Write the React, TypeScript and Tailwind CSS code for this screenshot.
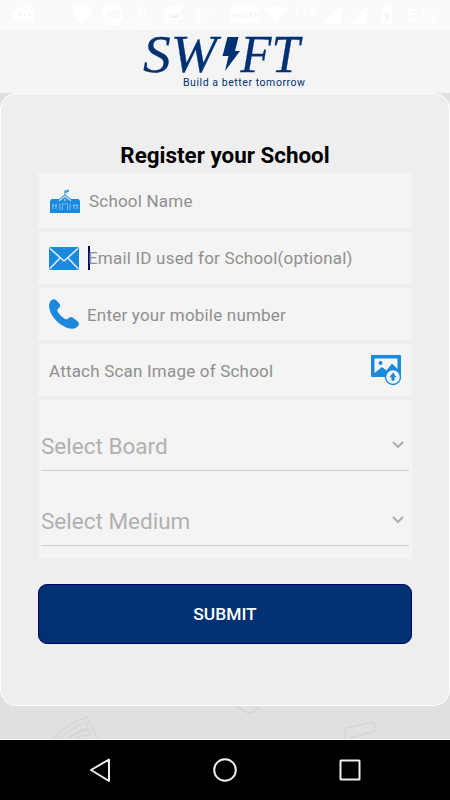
import type { ReactNode } from "react";

const StatusBar = () => (
  <div className="h-[30px] shrink-0 bg-[#fafafa]">
    <svg width="450" height="30" viewBox="0 0 450 30" fill="#fff" fontFamily="Roboto, sans-serif">
      <path d="M12 15l5-7q1-1 2-1h12q2 0 2 2v12q0 2-2 2H19q-1 0-2-1z" />
      <g fill="#f3f3f3">
        <circle cx="20" cy="15" r="1.2" />
        <circle cx="25" cy="15" r="1.2" />
        <circle cx="30" cy="15" r="1.2" />
      </g>
      <path d="M82.500 24C76 18 73 15 73 11c0-6 7-7 9.500-2.500C85 4 92 5 92 11c0 4-3 7-9.500 13z" />
      <circle cx="112.500" cy="15" r="10.500" />
      <path d="M106 12q4-3 3 5 3-7 5-5 1 2-1 5 3-7 5-5 1 1-1 5h3" fill="none" stroke="#f3f3f3" />
      <text x="138" y="16" fontSize="14" fontWeight="500">0</text>
      <text x="131.500" y="25" fontSize="8" fontWeight="700" textLength="21">KB/s</text>
      <path d="M167 6h14v14h-14zM164 9h1.500v12.500H178V24h-14z" />
      <path d="M169 18l3-4 2 2 3-3 3 5z" fill="#f3f3f3" />
      <text x="194.500" y="21" fontSize="15" fontWeight="500" textLength="16" lengthAdjust="spacingAndGlyphs">30°</text>
      <rect x="230" y="7" width="30" height="16" rx="2" />
      <text x="232.500" y="18" fontSize="8" fontWeight="700" fill="#f3f3f3" textLength="26">VOLTE</text>
      <path d="M265 9q10.500-7 21 0l-10.500 15z" />
      <text x="295" y="16" fontSize="12" textLength="21" fill="#fff" fontWeight="500">LTE</text>
      <path d="M341 7v17h-18zM367 7v17h-18zM381 8h3V6h5v2h3v16h-11z" />
      <path d="M388 10l-5 6h3l-1 6 5-7h-3z" fill="#f3f3f3" />
      <text x="406" y="22" fontSize="18" fontWeight="500" textLength="34">5:52</text>
    </svg>
  </div>
);

const Logo = () => (
  <header className="h-[63px] shrink-0 bg-[#f4f4f4] flex flex-col items-center">
    <svg
      className="-mt-[8px] shrink-0"
      width="180"
      height="70"
      viewBox="136 22 180 70"
      fill="#003172"
      fontFamily="'Liberation Serif', serif"
      fontStyle="italic"
      fontSize="53"
    >
      <g stroke="#003172" strokeWidth=".3">
        <text x="144" y="71.500" textLength="74" lengthAdjust="spacingAndGlyphs">SW</text>
        <text x="241.500" y="71.500" textLength="59" lengthAdjust="spacingAndGlyphs">FT</text>
      </g>
      <path d="M228.500 37h11l-3.500 14h5L226 71l3.500-15H223.500z" />
      <text
        x="184"
        y="86"
        fontFamily="Roboto, sans-serif"
        fontStyle="normal"
        fontSize="10.500"
        textLength="122"
      >
        Build a better tomorrow
      </text>
    </svg>
  </header>
);

const SchoolIcon = () => (
  <svg width="30" height="24" viewBox="0 0 30 24" fill="#1b89dc">
    <path d="M0 20.500h30V24H0zM1.500 10H9v11H0v-9zM21 10h7.500l1.500 2v9h-9z" />
    <path d="M7 11.500L15 5l8 6.500v1.500L15 7l-8 6z" opacity=".7" />
    <path d="M9 12.500L15 8l6 4.500V21H9zM14.500 1.500h1v4h-1z" />
    <path d="M15 1.500l4-1v2.500l-4 1z" opacity=".8" />
    <g fill="#8cc3ee">
      <path d="M2 15.500h2v2H2zM5 15.500h2v2H5zM23 15.500h2v2h-2zM26 15.500h2v2h-2z" />
      <path d="M2 18.500h2v1H2zM5 18.500h2v1H5zM23 18.500h2v1h-2zM26 18.500h2v1h-2z" />
      <path d="M9.500 14.500h1V21h-1zM12 14.500h6v.8h-6zM12 15h.8v6H12zM17.200 15h.8v6h-.8zM19.500 14.500h1V21h-1z" />
      <circle cx="15" cy="11" r="1.200" />
    </g>
  </svg>
);

const MailIcon = () => (
  <svg width="30" height="23" viewBox="0 0 30 23">
    <rect width="30" height="23" rx="2" fill="#1b89dc" />
    <path d="M1 1.500l14 12.500 14-12.500M1 21.500l10-10.500M29 21.500l-10-10.500" fill="none" stroke="#e6f0f8" strokeWidth="1.500" />
  </svg>
);

const PhoneIcon = () => (
  <svg width="30" height="30" viewBox="0 0 30 30" fill="#1b89dc">
    <path d="M3 .8Q5.500-.8 7.500 1.500l3 3.300q1.500 2-.2 3.800L8.800 10.200q-.9 1.300 0 2.800 3 4.500 7.200 7 1.500.8 2.700-.2l1.800-1.300q1.800-1 3.500.3l4.800 3.700q1.800 1.800.7 3.700-2.200 3.300-6 3.500C14.500 30 1.500 19 .2 8.500-.3 5 .8 2.300 3 .8z" />
  </svg>
);

const ImageUploadIcon = () => (
  <svg width="31" height="31" viewBox="0 0 31 31" fill="#1b89dc">
    <path fillRule="evenodd" d="M1 0h28q1 0 1 1v21H1q-1 0-1-1V1q0-1 1-1zm2.500 3.500V18l7.500-6 4.500 3.500L21 8.500l5.500 5.500V3.500z" />
    <circle cx="9.500" cy="8" r="2" />
    <circle cx="22" cy="22" r="7.500" fill="#f4f4f4" stroke="#1b89dc" strokeWidth="1.400" />
    <path d="M22 17.500l3.500 4.800h-2v3.500h-3v-3.500h-2z" />
  </svg>
);

type FieldProps = {
  label: string;
  className: string;
  textClass: string;
  children?: ReactNode;
};

const Field = ({ label, className, textClass, children }: FieldProps) => (
  <div className={`bg-[#f4f4f4] flex items-center ${className}`}>
    {children}
    <span className={`text-[17px] leading-5 tracking-[0.2px] whitespace-nowrap text-[#8f8f8f] ${textClass}`}>
      {label}
    </span>
  </div>
);

const Select = ({ label }: { label: string }) => (
  <div className="h-[50px] border-b border-[#cfcfcf] flex items-center justify-between pr-[5px]">
    <span className="text-[22.5px] leading-7 whitespace-nowrap text-[#b0b0b0]">{label}</span>
    <svg className="mb-px" width="12" height="8" viewBox="0 0 12 8" fill="none" stroke="#aaa" strokeWidth="1.800">
      <path d="M1 1l5 5 5-5" />
    </svg>
  </div>
);

const NavBar = () => (
  <nav className="h-[60px] shrink-0 bg-black">
    <svg width="450" height="60" viewBox="0 0 450 60" fill="none" stroke="#eee" strokeWidth="2" strokeLinejoin="round">
      <path d="M109 19.500v21.500L91 30z" />
      <circle cx="225" cy="30" r="10.800" />
      <rect x="340.500" y="20.500" width="19" height="19" rx=".5" />
    </svg>
  </nav>
);

export default function App() {
  return (
    <div className="w-[450px] h-[800px] overflow-hidden bg-[#e0e0e0] flex flex-col font-['Roboto',sans-serif]">
      <StatusBar />
      <Logo />
      <main className="h-[613px] shrink-0 rounded-[16px] border border-white bg-[#eee] px-[37px] flex flex-col">
        <h1 className="mt-[46px] h-[33px] text-center text-[22.4px] leading-[30px] font-bold text-black whitespace-nowrap">
          Register your School
        </h1>
        <div className="flex flex-col gap-1">
          <Field label="School Name" className="h-[55px] pl-3" textClass="ml-[9px]">
            <SchoolIcon />
          </Field>
          <Field label="Email ID used for School(optional)" className="h-[52px] pl-[11px]" textClass="">
            <MailIcon />
            <span className="ml-[9px] -mr-[2px] w-[2px] h-6 bg-[#000066]" />
          </Field>
          <Field label="Enter your mobile number" className="h-[52px] pl-[11px]" textClass="ml-2 pt-px">
            <PhoneIcon />
          </Field>
          <div className="h-[52px] bg-[#f4f4f4] flex items-center justify-between pl-[11px] pr-[10px]">
            <span className="pt-[2px] text-[17px] leading-5 tracking-[0.2px] whitespace-nowrap text-[#8f8f8f]">
              Attach Scan Image of School
            </span>
            <ImageUploadIcon />
          </div>
          <div className="h-[159px] bg-[#f4f4f4] px-[3px] pt-[21px] flex flex-col gap-[25px]">
            <Select label="Select Board" />
            <Select label="Select Medium" />
          </div>
        </div>
        <button className="mt-[25px] h-[60px] shrink-0 rounded-[9px] border border-[#000066] bg-[#003172] text-[17.4px] font-medium text-white">
          SUBMIT
        </button>
      </main>
      {/* faded book doodles behind the card */}
      <svg width="450" height="34" viewBox="0 706 450 34" fill="none" stroke="#d5d5d5" strokeWidth="1.500" className="shrink-0">
        <path d="M54 738q14-15 33-21l10 21M61 738q10-11 25-15l2 5q-11 3-19 10M68 738q8-6 20-8l3 6M75 738q6-3 14-3" />
        <path d="M237 706q8 7 13 7 7-1 9-7" />
        <path d="M344 738l2-10 28-6 2 9-26 7" />
        <path d="M0 739.500h450" stroke="#f4f4f4" strokeWidth="1" />
      </svg>
      <NavBar />
    </div>
  );
}
